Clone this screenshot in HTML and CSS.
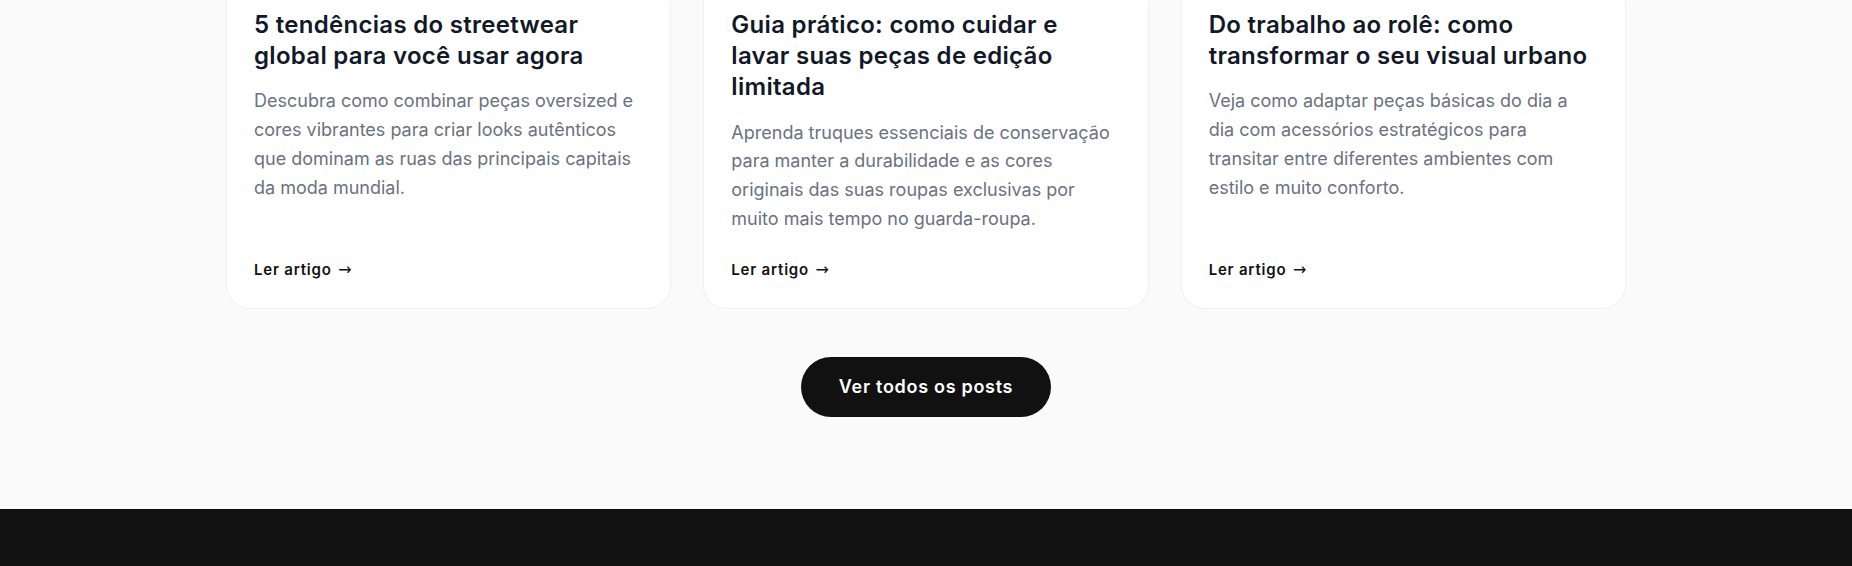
FILE: index.html
```html
<!DOCTYPE html>
<html lang="pt-BR">
<head>
<meta charset="utf-8">
<title>Blog</title>
<link rel="stylesheet" href="styles.css">
</head>
<body>
<section class="blog">
  <div class="container">
    <div class="posts">
      <article class="post">
        <h3 class="post-title">5 tendências do streetwear global para você usar agora</h3>
        <p class="post-text">Descubra como combinar peças oversized e cores vibrantes para criar looks autênticos que dominam as ruas das principais capitais da moda mundial.</p>
        <a class="post-link" href="#">Ler artigo <span class="arrow">→</span></a>
      </article>
      <article class="post">
        <h3 class="post-title">Guia prático: como cuidar e lavar suas peças de edição limitada</h3>
        <p class="post-text">Aprenda truques essenciais de conservação para manter a durabilidade e as cores originais das suas roupas exclusivas por muito mais tempo no guarda-roupa.</p>
        <a class="post-link" href="#">Ler artigo <span class="arrow">→</span></a>
      </article>
      <article class="post">
        <h3 class="post-title">Do trabalho ao rolê: como transformar o seu visual urbano</h3>
        <p class="post-text">Veja como adaptar peças básicas do dia a dia com acessórios estratégicos para transitar entre diferentes ambientes com estilo e muito conforto.</p>
        <a class="post-link" href="#">Ler artigo <span class="arrow">→</span></a>
      </article>
    </div>
    <div class="blog-actions">
      <a class="btn-all" href="#">Ver todos os posts</a>
    </div>
  </div>
</section>
<footer class="site-footer"></footer>
</body>
</html>
```
FILE: styles.css
```css
* {
  box-sizing: border-box;
}

html, body {
  margin: 0;
  padding: 0;
}

body {
  background: #fafafa;
  font-family: Inter, "Noto Sans", "Liberation Sans", sans-serif;
  font-optical-sizing: none;
  color: #111827;
  -webkit-font-smoothing: antialiased;
}

.blog {
  margin-top: -20px;
  padding-bottom: 92px;
}

.container {
  max-width: 1400px;
  margin: 0 auto;
}

.posts {
  display: grid;
  grid-template-columns: repeat(3, 1fr);
  gap: 32px;
}

.post {
  display: flex;
  flex-direction: column;
  background: #fff;
  border: 1px solid #f0f0f0;
  border-radius: 24px;
  padding: 28px 27px 27px;
}

.post-title {
  margin: 0;
  font-size: 24px;
  line-height: 1.3;
  font-weight: 600;
  letter-spacing: 0.3px;
  color: #111827;
}

.post-text {
  margin: 16px 0 25px;
  font-size: 18px;
  line-height: 1.6;
  color: #6b7280;
}

.post-link {
  margin-top: auto;
  font-size: 15px;
  line-height: 22px;
  font-weight: 600;
  letter-spacing: 0.8px;
  color: #111;
  text-decoration: none;
}

.arrow {
  display: inline-block;
  margin-left: 2px;
  font-family: "DejaVu Sans", sans-serif;
  font-weight: 400;
  font-size: 16px;
  line-height: 1;
  letter-spacing: 0;
}

.blog-actions {
  display: flex;
  justify-content: center;
  margin-top: 48px;
}

.btn-all {
  display: inline-flex;
  align-items: center;
  justify-content: center;
  height: 60px;
  padding: 0 38px;
  border-radius: 999px;
  background: #111;
  color: #fff;
  font-size: 18px;
  font-weight: 600;
  letter-spacing: 0.7px;
  text-decoration: none;
}

.site-footer {
  background: #111;
  height: 320px;
}
```
